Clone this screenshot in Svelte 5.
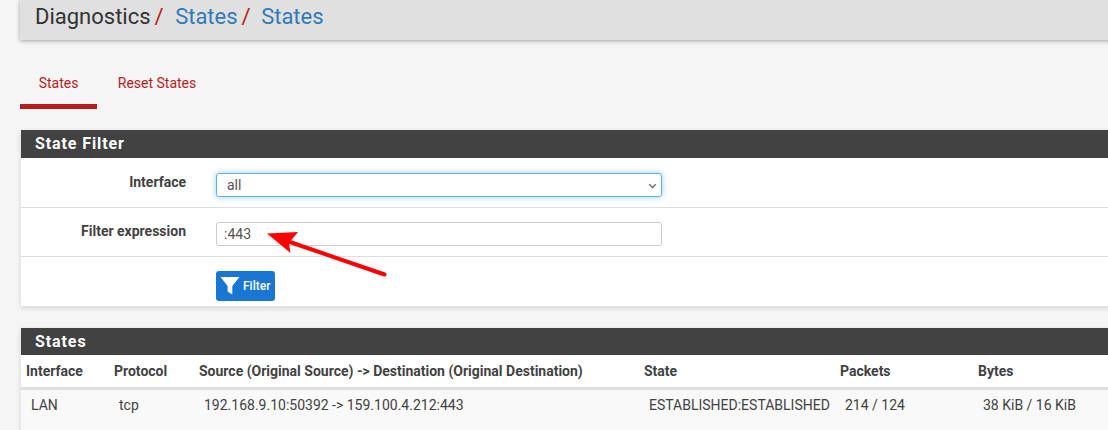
<script>
  const columns = ['Interface', 'Protocol', 'Source (Original Source) -> Destination (Original Destination)', 'State', 'Packets', 'Bytes'];
  const row = ['LAN', 'tcp', '192.168.9.10:50392 -> 159.100.4.212:443', 'ESTABLISHED:ESTABLISHED', '214 / 124', '38 KiB / 16 KiB'];
</script>

<div class="page">
  <header class="crumbs">
    <span class="root">Diagnostics</span><span class="sep">/</span>
    <a href="#states">States</a><span class="sep second">/</span>
    <a href="#states">States</a>
  </header>

  <nav class="tabs">
    <a class="tab active" href="#states">States</a>
    <a class="tab" href="#reset">Reset States</a>
  </nav>

  <section class="panel filter">
    <h2>State Filter</h2>
    <div class="form-row first">
      <label for="iface">Interface</label>
      <div class="select-wrap">
        <select id="iface" class="control focus"><option>all</option></select>
        <svg class="chevron" viewBox="0 0 10 7" width="9" height="6" aria-hidden="true">
          <path d="M1 1.300L5 5.300L9 1.300" fill="none" stroke="#666" stroke-width="1.500" />
        </svg>
      </div>
    </div>
    <div class="form-row">
      <label for="expr">Filter expression</label>
      <input id="expr" class="control" value=":443" />
    </div>
    <div class="form-row last">
      <span></span>
      <button type="button">
        <svg viewBox="0 0 20 20" width="20" height="20" aria-hidden="true">
          <path d="M0.5 1h19L12.300 10v8.600L7.600 15.600V10z" fill="#fff" />
        </svg>
        Filter
      </button>
    </div>
  </section>

  <section class="panel states">
    <h2>States</h2>
    <table>
      <colgroup>
        <col style="width:88px" /><col style="width:85px" /><col style="width:445px" />
        <col style="width:196px" /><col style="width:138px" /><col />
      </colgroup>
      <thead>
        <tr>{#each columns as c}<th>{c}</th>{/each}</tr>
      </thead>
      <tbody>
        <tr>{#each row as c}<td>{c}</td>{/each}</tr>
      </tbody>
    </table>
  </section>

  <svg class="arrow" width="1108" height="430" viewBox="0 0 1108 430" aria-hidden="true">
    <path d="M384.500 274.500L287 241" stroke="#f00" stroke-width="4" stroke-linecap="round" fill="none" />
    <path d="M267 233.500L298 232L289 243L290.500 253z" fill="#f00" />
  </svg>
</div>

<style>
  :global(body) {
    margin: 0;
    background: #f5f5f5;
    overflow: hidden;
  }
  .page {
    position: relative;
    height: 430px;
    overflow: hidden;
    font-family: Roboto, "Liberation Sans", sans-serif;
    font-size: 14px;
    color: #424242;
    padding-left: 20px;
    box-sizing: border-box;
  }
  .crumbs {
    height: 40px;
    box-sizing: border-box;
    padding: 4px 0 0 15px;
    margin-right: -20px;
    background: #e0e0e0;
    box-shadow: 0 1px 4px rgba(0, 0, 0, 0.35);
    font-size: 22px;
    line-height: 26px;
    white-space: nowrap;
  }
  .root { color: #333; }
  .crumbs a { color: #337ab7; text-decoration: none; }
  .sep { color: #b71c1c; margin: 0 6px 0 4px; }
  .sep.second { margin: 0 5px 0 4px; }
  .tabs {
    display: flex;
    height: 49px;
    margin-top: 20px;
  }
  .tab {
    box-sizing: border-box;
    padding: 15px 0 0;
    width: 77px;
    text-align: center;
    color: #b71c1c;
    text-decoration: none;
    line-height: 17px;
  }
  .tab:last-child { width: 120px; }
  .tab.active { border-bottom: 5px solid #b71c1c; }
  .panel {
    margin-left: 1px;
    margin-right: -20px;
    background: #fff;
    box-shadow: 0 2px 5px rgba(0, 0, 0, 0.14);
  }
  .filter { margin-top: 21px; }
  .states { margin-top: 22px; }
  h2 {
    margin: 0;
    padding-left: 14px;
    background: #424242;
    color: #fff;
    font-size: 16px;
    font-weight: 700;
    letter-spacing: 0.9px;
    height: 28px;
    line-height: 28px;
  }
  .states h2 { height: 27px; line-height: 27px; }
  .form-row {
    display: grid;
    grid-template-columns: 165px 446px;
    column-gap: 30px;
    align-items: center;
    height: 49px;
    box-sizing: border-box;
    padding-top: 4px;
    border-bottom: 1px solid #dfdfdf;
  }
  .form-row.first { height: 50px; }
  .form-row.last { height: 49px; border-bottom: 0; padding-top: 14px; padding-bottom: 5px; }
  label {
    text-align: right;
    font-weight: 700;
    color: #424242;
    margin-top: -6px;
  }
  .select-wrap {
    position: relative;
    height: 24px;
  }
  .chevron {
    position: absolute;
    right: 5px;
    top: 10px;
    pointer-events: none;
  }
  .control {
    display: block;
    box-sizing: border-box;
    width: 446px;
    height: 24px;
    padding: 0 0 0 7px;
    border: 1px solid #ccc;
    border-radius: 3px;
    background: #fff;
    font: 14px Roboto, "Liberation Sans", sans-serif;
    color: #555;
    outline: none;
    appearance: none;
  }
  .control.focus {
    border-color: #66afe9;
    padding-left: 10px;
    box-shadow: 0 0 6px rgba(102, 175, 233, 0.65);
  }
  button {
    display: inline-flex;
    align-items: center;
    gap: 3px;
    width: 59px;
    height: 30px;
    padding: 0 0 0 4px;
    box-sizing: border-box;
    border: 0;
    border-radius: 3px;
    background: #1976d2;
    color: #fff;
    font: 500 12px Roboto, "Liberation Sans", sans-serif;
  }
  table {
    width: 100%;
    table-layout: fixed;
    border-collapse: collapse;
  }
  th {
    height: 33px;
    box-sizing: border-box;
    padding: 0 0 0 5px;
    text-align: left;
    font-weight: 700;
    color: #424242;
    border-bottom: 3px solid #e0e0e0;
    white-space: nowrap;
  }
  td {
    height: 60px;
    padding: 7px 0 15px 10px;
    background: #f9f9f9;
    color: #424242;
    white-space: nowrap;
    box-sizing: border-box;
    vertical-align: top;
  }
  .arrow {
    position: absolute;
    left: 0;
    top: 0;
    pointer-events: none;
  }
</style>
